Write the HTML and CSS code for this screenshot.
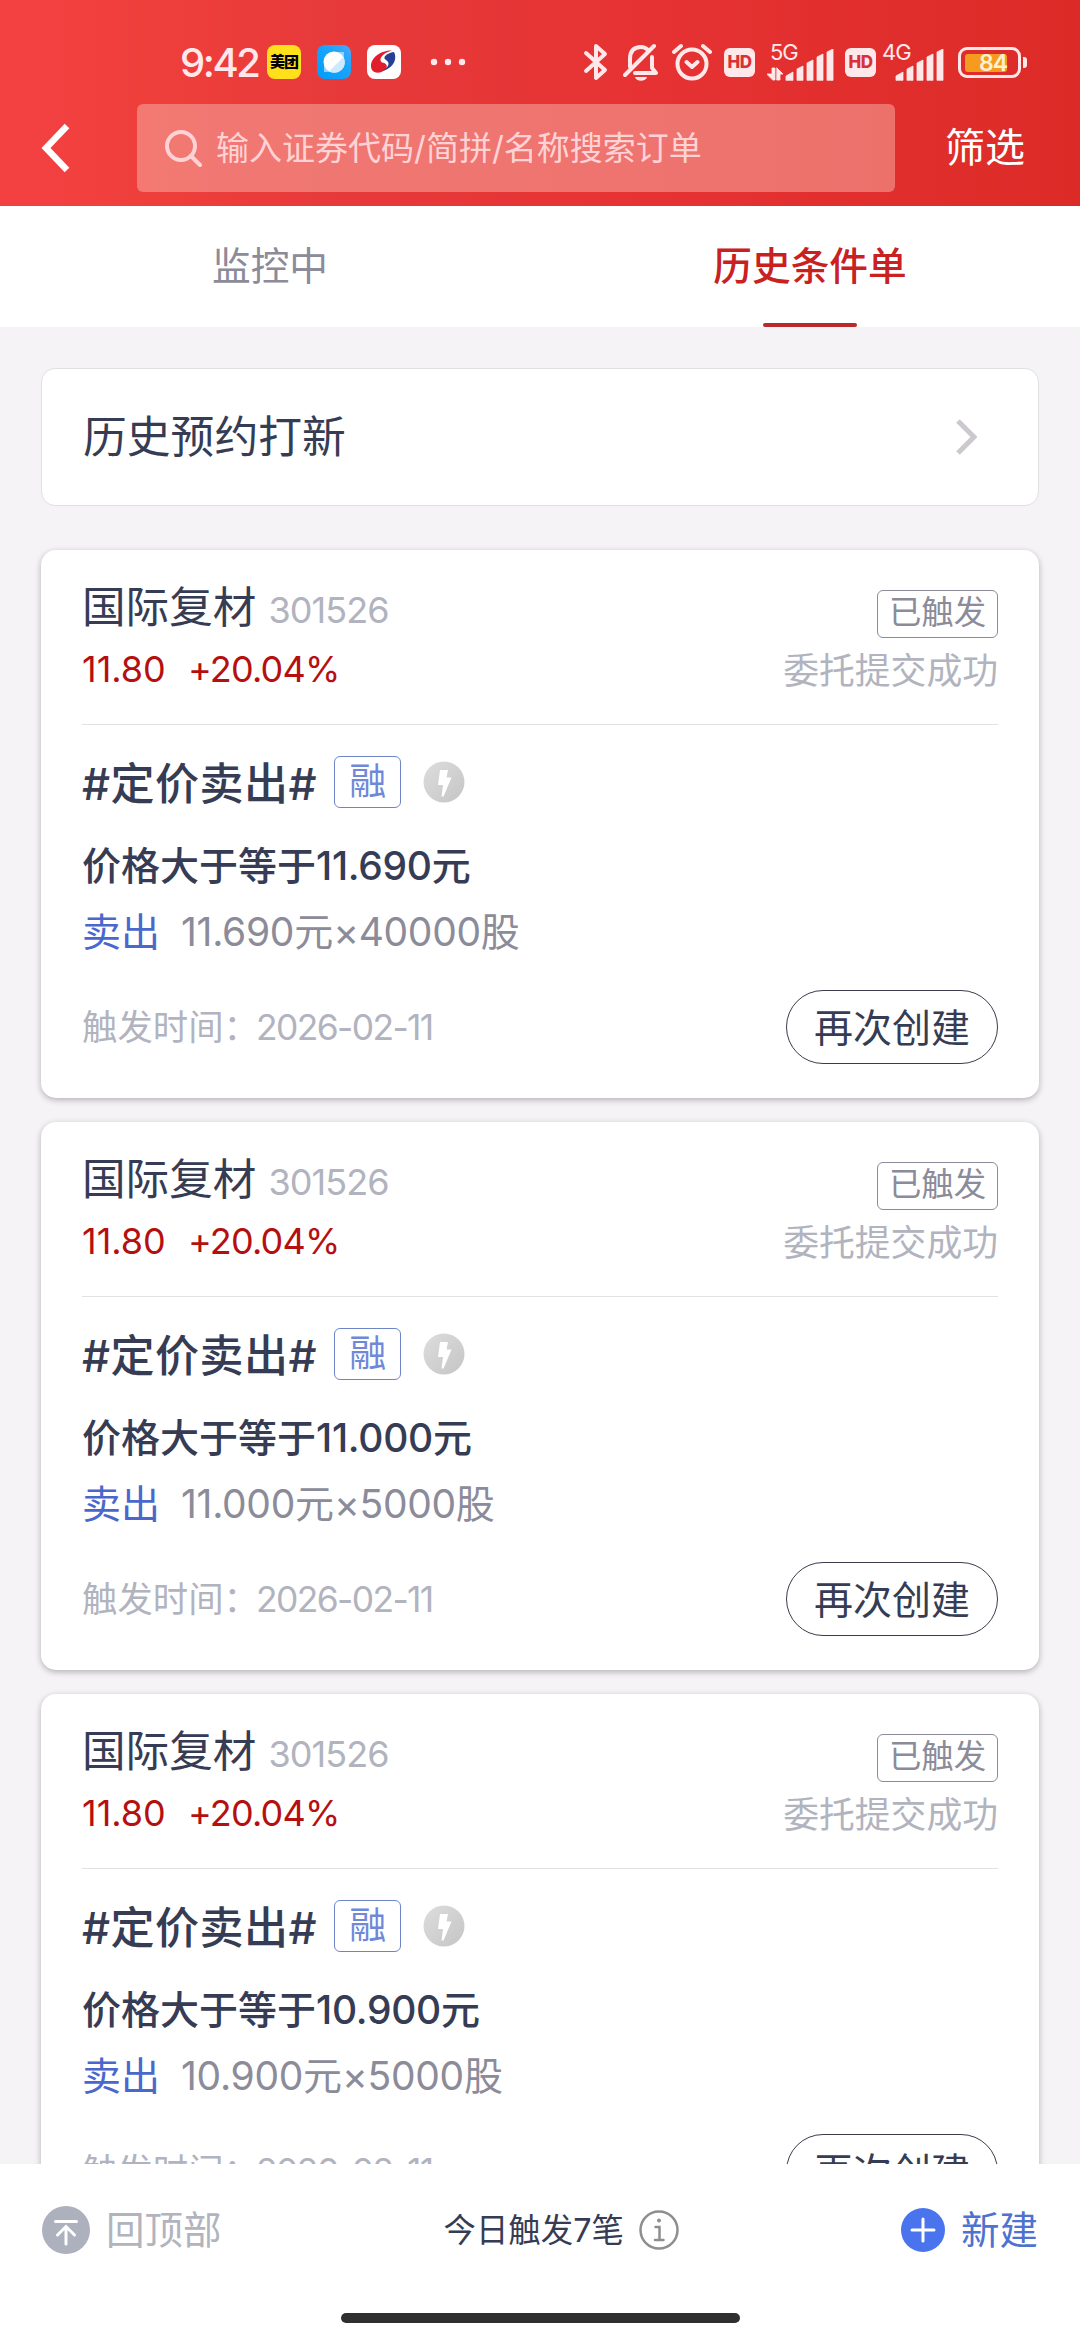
FILE: index.html
```html
<!DOCTYPE html>
<html lang="zh-CN">
<head>
    <meta charset="UTF-8" />
    <meta name="viewport" content="width=device-width, initial-scale=1" />
    <title>历史条件单</title>
    <link rel="stylesheet" href="styles.css">
</head>
<body>
    <div class="app">
        <header class="header">
            <div class="status-bar">
                <span class="time">9:42</span>
                <span class="app-icon meituan">美团</span>
                <svg class="app-icon" viewBox="0 0 34 34">
                    <defs>
                        <linearGradient id="blueBg" x1="0" y1="1" x2="1" y2="0">
                            <stop offset="0" stop-color="#009dfb" />
                            <stop offset="0.6" stop-color="#18a4fd" />
                            <stop offset="1" stop-color="#4aa8f8" />
                        </linearGradient>
                    </defs>
                    <rect width="34" height="34" rx="8" fill="url(#blueBg)" />
                    <path d="M7 19 V27 H15 Z M20 7 H27 V15 Z" fill="#8fd3ff" />
                    <circle cx="17" cy="17" r="10.5" fill="#fff" />
                    <path d="M26.5 12 A10.5 10.5 0 0 1 12 26.3 Z" fill="#cfe9ff" />
                </svg>
                <svg class="app-icon" viewBox="0 0 34 34">
                    <rect width="34" height="34" rx="8" fill="#fff" />
                    <path d="M25 5.5 C15 5 4 12 4 21 C4 29 13 29 18 25 C22 21 19 18 15 17.5 C11 15 15 8 25 5.5 Z" fill="#e01f2d" />
                    <path d="M27 7 C31 15 25 24 15 26 C21 23 24 18 19 15 C15 13 19 8 27 7 Z" fill="#243f94" />
                </svg>
                <svg class="more" viewBox="0 0 36 8">
                    <circle cx="4" cy="4" r="3.2" /><circle cx="18" cy="4" r="3.2" /><circle cx="32" cy="4" r="3.2" />
                </svg>
                <div class="status-right">
                    <svg class="bluetooth" viewBox="0 0 26 40">
                        <path d="M3 11 L22 28 L13 36 V4 L22 12 L3 29" />
                    </svg>
                    <svg class="bell" viewBox="0 0 36 38">
                        <path d="M7 24 V16 C7 8 11 4 18 4 C21 4 23 5 25 7 M29 14 V25 L33 30 H12 M2 32 L31 3" />
                        <path class="solid" d="M12 34 H24 C23 39 13 39 12 34 Z" />
                    </svg>
                    <svg class="alarm" viewBox="0 0 40 38">
                        <circle cx="20" cy="21" r="14.5" />
                        <path d="M2 9 L9 3 M38 9 L31 3 M14.5 19 L20 24 L25.5 19" />
                    </svg>
                    <span class="hd">HD</span>
                    <div class="signal signal-5g">
                        <span class="net">5G</span>
                        <svg viewBox="0 0 68 32">
                            <path d="M0 25 L5 25 V19 H8 V31 H6 Z M10 19 L16 25 H13 V31 H10 Z" />
                            <path d="M19 31 V27 L26 23 V31 Z M30 31 V20 L36 17 V31 Z M40 31 V14 L46 11 V31 Z M50 31 V8 L56 5 V31 Z M60 31 V3 L66 0 V31 Z" />
                        </svg>
                    </div>
                    <span class="hd hd-second">HD</span>
                    <div class="signal signal-4g">
                        <span class="net">4G</span>
                        <svg viewBox="0 0 68 32">
                            <path d="M19 31 V27 L26 23 V31 Z M30 31 V20 L36 17 V31 Z M40 31 V14 L46 11 V31 Z M50 31 V8 L56 5 V31 Z M60 31 V3 L66 0 V31 Z" />
                        </svg>
                    </div>
                    <div class="battery"><span class="battery-level">84</span></div>
                </div>
            </div>
            <div class="nav-bar">
                <svg class="back" viewBox="0 0 30 50"><path d="M26 3 L5 25 L26 47" /></svg>
                <div class="search">
                    <svg viewBox="0 0 38 38"><circle cx="16" cy="17" r="14" /><path d="M26 27 L35 36" /></svg>
                    <span>输入证券代码/简拼/名称搜索订单</span>
                </div>
                <span class="filter">筛选</span>
            </div>
        </header>

        <nav class="tabs">
            <div class="tab">监控中</div>
            <div class="tab active">历史条件单</div>
        </nav>

        <main class="content">
            <div class="entry">
                <span>历史预约打新</span>
                <svg viewBox="0 0 22 38"><path d="M3 3 L19 19 L3 35" /></svg>
            </div>
            <div id="orderList"></div>
        </main>

        <footer class="footer">
            <div class="footer-row">
                <div class="to-top">
                    <svg viewBox="0 0 48 48"><circle cx="24" cy="24" r="24" /><path d="M13.5 15.5 H34.5 M24 38 V21 M15.5 29 L24 20.5 L32.5 29" /></svg>
                    <span>回顶部</span>
                </div>
                <div class="today">
                    <span>今日触发7笔</span>
                    <svg viewBox="0 0 40 40"><circle cx="20" cy="20" r="18.5" /><path d="M16.5 17 H20.5 V30 M16 30 H24.5" /><circle class="dot" cx="20" cy="10.5" r="2" /></svg>
                </div>
                <div class="create">
                    <svg viewBox="0 0 44 44"><circle cx="22" cy="22" r="22" /><path d="M22 11 V33 M11 22 H33" /></svg>
                    <span>新建</span>
                </div>
            </div>
            <div class="home-bar"></div>
        </footer>
    </div>

    <script>
        const orders = [
            { price: '11.690', amount: '40000' },
            { price: '11.000', amount: '5000' },
            { price: '10.900', amount: '5000' }
        ];

        // Render one card per order
        document.getElementById('orderList').innerHTML = orders.map(order => `
            <section class="card">
                <div class="card-head">
                    <div>
                        <div class="stock"><span class="stock-name">国际复材</span><span class="stock-code">301526</span></div>
                        <div class="quote"><span class="last">11.80</span><span class="change">+20.04%</span></div>
                    </div>
                    <div class="state">
                        <span class="state-tag">已触发</span>
                        <span class="state-text">委托提交成功</span>
                    </div>
                </div>
                <div class="strategy">
                    <span class="strategy-name">#定价卖出#</span>
                    <span class="margin-tag">融</span>
                    <svg class="bolt" viewBox="0 0 42 42">
                        <defs>
                            <linearGradient id="boltBg" x1="0" y1="0" x2="1" y2="1">
                                <stop offset="0" stop-color="#dedddd" />
                                <stop offset="1" stop-color="#c6c5c5" />
                            </linearGradient>
                        </defs>
                        <circle cx="21" cy="21" r="20.5" fill="url(#boltBg)" />
                        <path d="M17 9 H25 L23.5 16.5 H28.5 L20.5 35.5 H18.5 L20 24 H15 Z" fill="#fff" />
                    </svg>
                </div>
                <div class="condition">价格大于等于<span class="num">${order.price}</span>元</div>
                <div class="action"><span class="side">卖出</span><span class="detail"><span class="num">${order.price}</span>元<span class="num">×${order.amount}</span>股</span></div>
                <div class="card-foot">
                    <span class="trigger-time">触发时间：<span class="date">2026-02-11</span></span>
                    <button class="btn-again">再次创建</button>
                </div>
            </section>`).join('');
    </script>
</body>
</html>
```
FILE: styles.css
```css
* {
    box-sizing: border-box;
}
body {
    margin: 0;
    font-family: Inter, "Noto Sans CJK SC", sans-serif;
    color: #363c54;
    background: #f6f3f7;
}
svg {
    display: block;
    flex: none;
}
.app {
    width: 1080px;
    height: 2340px;
    display: flex;
    flex-direction: column;
    overflow: hidden;
}

/* header */
.header {
    height: 206px;
    flex: none;
    background: linear-gradient(90deg, #f34142 0%, #ef3f3b 14%, #e73a3a 30%, #e63233 60%, #dc2b27 100%);
}
.status-bar {
    height: 104px;
    padding: 20px 59px 0 180px;
    display: flex;
    align-items: center;
    color: #ffe8ea;
}
.time {
    width: 87px;
    font-size: 40px;
    font-weight: 500;
    letter-spacing: -2.4px;
}
.app-icon {
    width: 34px;
    height: 34px;
    margin-right: 16px;
    flex: none;
}
.meituan {
    border-radius: 8px;
    background: #ffe01b;
    color: #000;
    font-size: 15px;
    font-weight: 900;
    line-height: 33px;
    text-align: center;
    letter-spacing: -1px;
    white-space: nowrap;
}
.more {
    width: 36px;
    height: 8px;
    margin-left: 13px;
    fill: #ffe8ea;
}
.status-right {
    margin-left: auto;
    display: flex;
    align-items: center;
}
.status-right svg {
    fill: none;
    stroke: #ffe8ea;
    stroke-width: 4;
    stroke-linecap: round;
    stroke-linejoin: round;
}
.bluetooth {
    width: 26px;
    height: 40px;
    margin-right: 14px;
}
.bell {
    width: 36px;
    height: 38px;
    margin-right: 13px;
}
.status-right .solid {
    fill: #ffe8ea;
    stroke: none;
}
.alarm {
    width: 40px;
    height: 38px;
    margin-right: 12px;
}
.hd {
    width: 31px;
    height: 29px;
    border-radius: 6px;
    background: #ffe8ea;
    color: #d83238;
    font-size: 17px;
    font-weight: 800;
    line-height: 29px;
    text-align: center;
    letter-spacing: -0.5px;
}
.signal {
    position: relative;
    width: 68px;
    height: 37px;
    padding-top: 5px;
}
.signal-5g {
    margin-left: 12px;
}
.signal-4g {
    margin-left: 1px;
}
.signal .net {
    position: absolute;
    left: 3px;
    top: -3px;
    font-size: 22px;
    line-height: 22px;
    letter-spacing: -1px;
}
.signal-4g .net {
    left: 5px;
}
.status-right .signal svg {
    width: 68px;
    height: 32px;
    fill: #ffe8ea;
    stroke-width: 0.8;
}
.hd-second {
    margin-left: 10px;
}
.battery {
    position: relative;
    width: 63px;
    height: 31px;
    margin-left: 13px;
    padding: 4px;
    border: 3px solid #ffe8ea;
    border-radius: 9px;
}
.battery::after {
    content: "";
    position: absolute;
    right: -9px;
    top: 7px;
    width: 4px;
    height: 11px;
    border-radius: 0 3px 3px 0;
    background: #ffe8ea;
}
.battery-level {
    display: block;
    width: 42px;
    height: 18px;
    border-radius: 3px;
    background: #f49b20;
    color: #fff0cf;
    font-size: 23px;
    font-weight: 600;
    line-height: 18px;
    letter-spacing: -1px;
    text-align: right;
}
.nav-bar {
    display: flex;
    align-items: center;
    height: 88px;
    padding-left: 41px;
}
.back {
    width: 30px;
    height: 50px;
    fill: none;
    stroke: #fff;
    stroke-width: 6.5;
}
.search {
    width: 758px;
    height: 88px;
    margin-left: 66px;
    padding-left: 28px;
    display: flex;
    align-items: center;
    gap: 13px;
    border-radius: 6px;
    background: rgba(246, 170, 160, 0.55);
    color: #ffd3d5;
    font-size: 33px;
}
.search span {
    padding-bottom: 5px;
}
.search svg {
    width: 38px;
    height: 38px;
    fill: none;
    stroke: #ffd3d5;
    stroke-width: 4;
    stroke-linecap: round;
}
.filter {
    margin-left: 50px;
    padding-bottom: 6px;
    color: #fff;
    font-size: 40px;
}

/* tabs */
.tabs {
    display: flex;
    flex: none;
    height: 121px;
    background: #fff;
}
.tab {
    position: relative;
    flex: 1;
    text-align: center;
    line-height: 121px;
    font-size: 38.7px;
    color: #8b8b9a;
}
.tab.active {
    color: #c9211f;
    font-weight: 500;
}
.tab.active::after {
    content: "";
    position: absolute;
    left: 223px;
    bottom: 0;
    width: 94px;
    height: 4px;
    border-radius: 2px;
    background: #b92b2b;
}

/* list */
.content {
    flex: 1;
    min-height: 0;
    padding: 41px 41px 0;
    overflow: hidden;
}
.entry {
    display: flex;
    align-items: center;
    justify-content: space-between;
    height: 138px;
    margin-bottom: 44px;
    padding: 0 61px 0 41px;
    border: 1px solid #dfdfe4;
    border-radius: 14px;
    background: #fff;
    font-size: 43.8px;
}
.entry span {
    padding-bottom: 7px;
}
.entry svg {
    width: 22px;
    height: 38px;
    fill: none;
    stroke: #ccc8ce;
    stroke-width: 5;
}
.card {
    height: 548px;
    margin-bottom: 24px;
    padding: 0 41px;
    border-radius: 15px;
    background: #fff;
    box-shadow: 0 2px 6px rgba(0, 0, 0, 0.28);
}
.card-head {
    display: flex;
    justify-content: space-between;
    height: 175px;
    border-bottom: 1px solid #e2e2e5;
}
.stock {
    display: flex;
    align-items: baseline;
    height: 60px;
    padding-top: 28px;
    box-sizing: content-box;
    line-height: 60px;
}
.stock-name {
    font-size: 43.6px;
}
.stock-code {
    margin-left: 12px;
    font-size: 36px;
    letter-spacing: -0.9px;
    color: #b1b3be;
}
.quote {
    display: flex;
    font-size: 36px;
    line-height: 62px;
    color: #b5100f;
}
.last {
    width: 106px;
}
.change {
    letter-spacing: -0.8px;
}
.state {
    display: flex;
    flex-direction: column;
    align-items: flex-end;
}
.state-tag {
    width: 121px;
    height: 48px;
    margin-top: 40px;
    border: 1px solid #8b8b99;
    border-radius: 6px;
    text-align: center;
    font-size: 32.4px;
    line-height: 43px;
    color: #8b8b99;
}
.state-text {
    font-size: 35.8px;
    line-height: 66px;
    color: #b1b3be;
}
.strategy {
    display: flex;
    align-items: center;
    height: 114px;
}
.strategy-name {
    padding-bottom: 3px;
    font-size: 44px;
    font-weight: 500;
    letter-spacing: 0.5px;
}
.margin-tag {
    width: 67px;
    height: 52px;
    margin-left: 17px;
    border: 1px solid #6e86c8;
    border-radius: 6px;
    text-align: center;
    font-size: 37px;
    line-height: 49px;
    color: #6f88da;
}
.bolt {
    width: 42px;
    height: 42px;
    margin-left: 22px;
}
.condition {
    font-size: 39px;
    font-weight: 500;
    line-height: 54px;
}
.num {
    letter-spacing: -0.3px;
}
.action {
    display: flex;
    margin-top: 12px;
    font-size: 39px;
    line-height: 54px;
    color: #8b8b99;
}
.side {
    width: 99px;
    color: #4a68cc;
}
.card-foot {
    display: flex;
    align-items: center;
    justify-content: space-between;
    height: 74px;
    margin-top: 31px;
}
.trigger-time {
    padding-bottom: 6px;
    font-size: 35.4px;
    color: #b1b3be;
}
.date {
    margin-left: -3px;
    letter-spacing: -1.6px;
}
.btn-again {
    width: 212px;
    height: 74px;
    padding: 0 0 5px;
    border: 1.5px solid #3a3c4c;
    border-radius: 37px;
    background: #fff;
    font-family: inherit;
    font-size: 39px;
    color: #363c54;
}

/* footer */
.footer {
    flex: none;
    height: 176px;
    background: #fff;
}
.footer-row {
    display: flex;
    align-items: center;
    justify-content: space-between;
    height: 132px;
    padding: 0 42px;
}
.footer-row > div {
    display: flex;
    align-items: center;
}
.footer-row span {
    padding-bottom: 6px;
}
.footer-row svg {
    fill: none;
    stroke: #fff;
    stroke-linecap: round;
}
.to-top {
    gap: 16px;
    font-size: 38.5px;
    color: #b1b3be;
}
.to-top svg {
    width: 48px;
    height: 48px;
    stroke-width: 3;
}
.to-top circle {
    fill: #adb1be;
    stroke: none;
}
.today {
    gap: 15px;
    font-size: 32.4px;
}
.today svg {
    width: 40px;
    height: 40px;
    stroke: #8e8e8e;
    stroke-width: 2.5;
}
.today .dot {
    fill: #8e8e8e;
    stroke: none;
}
.create {
    gap: 16px;
    font-size: 38.5px;
    color: #4d72d0;
}
.create svg {
    width: 44px;
    height: 44px;
    stroke-width: 3;
}
.create circle {
    fill: #4a74ee;
    stroke: none;
}
.home-bar {
    width: 399px;
    height: 10px;
    margin: 17px auto 0;
    border-radius: 5px;
    background: #2f2f2f;
}
```
